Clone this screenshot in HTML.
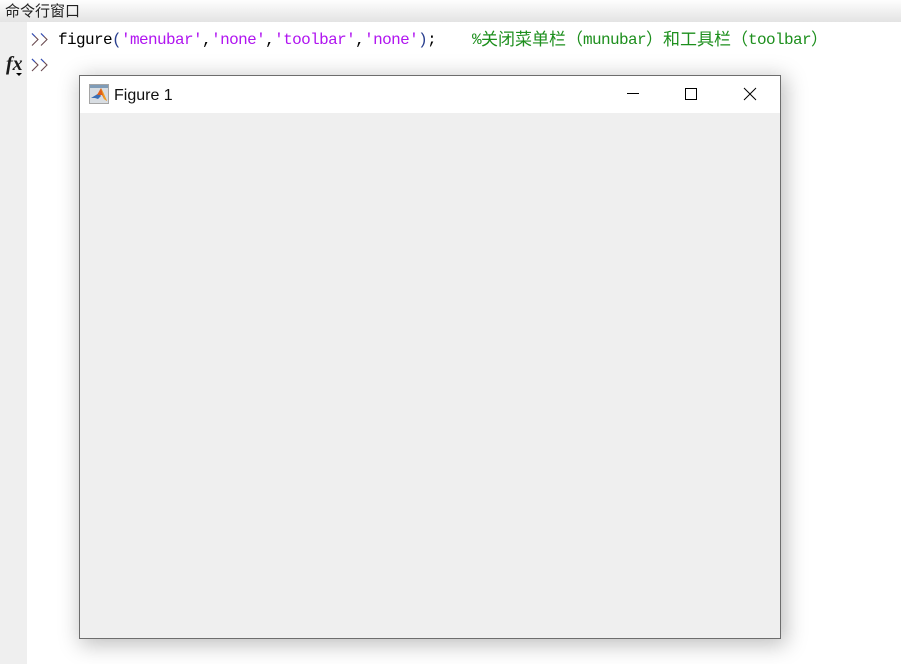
<!DOCTYPE html>
<html><head><meta charset="utf-8"><style>
html,body{margin:0;padding:0;background:#fff}
body{position:relative;width:901px;height:664px;overflow:hidden}
div,span.a{position:absolute}
#hd{left:0;top:0;width:901px;height:22px;background:linear-gradient(#fefefe,#e3e3e3)}
#hdt{left:5px;top:1px;font:15px/19px "Noto Sans CJK SC","WenQuanYi Zen Hei",sans-serif;color:#222;white-space:nowrap}
#gut{left:0;top:22px;width:27px;height:642px;background:#efefef}
.ln{font:16px/20px "Liberation Mono",monospace;letter-spacing:-.6px;white-space:pre;color:#000}
.p{color:#b014f0}.g{color:#1d8f1d}.b{color:#2a3f8f}
.c{position:absolute;top:-2px;font:17px/20px "WenQuanYi Zen Hei","Noto Sans CJK SC",sans-serif;color:#1d8f1d}
#win{left:79px;top:75px;width:700px;height:562px;border:1px solid #6d6d6d;background:#efefef;box-shadow:3px 4px 20px 2px rgba(0,0,0,.25)}
#tb{left:0;top:0;width:700px;height:37px;background:#fff}
#tt{left:34px;top:9px;font:16px/21px "Liberation Sans",sans-serif;color:#111;white-space:nowrap}
</style></head><body>
<div id="hd"></div>
<div id="hdt">命令行窗口</div>
<div id="gut"></div>
<svg style="position:absolute;left:30px;top:32px" width="20" height="42" fill="none" stroke-width="1.1"><path d="M2 1.5l6 6-6 6M11 1.5l6 6-6 6" stroke="#6a4a50"/><path d="M2 1.5l3 3M11 1.5l3 3" stroke="#3050c0"/><path d="M2 27l6 6-6 6M11 27l6 6-6 6" stroke="#6a4a50"/><path d="M2 27l3 3M11 27l3 3" stroke="#3050c0"/></svg>
<div class="ln" style="left:58px;top:30px">figure<span class="b">(</span><span class="p">'menubar'</span>,<span class="p">'none'</span>,<span class="p">'toolbar'</span>,<span class="p">'none'</span><span class="b">)</span>;</div>
<div class="ln g" style="left:472px;top:30px">%</div>
<div style="left:481px;top:30px;width:400px;height:20px">
<span class="c" style="left:0">关闭菜单栏</span><span class="c" style="left:85px">（</span><span class="ln g a" style="left:102px;top:0">munubar</span><span class="c" style="left:165px">）</span><span class="c" style="left:182px">和工具栏</span><span class="c" style="left:250px">（</span><span class="ln g a" style="left:267px;top:0">toolbar</span><span class="c" style="left:330px">）</span>
</div>
<div style="left:6px;top:52px;font:italic bold 20px/24px 'Liberation Serif',serif;color:#1a1a1a">fx</div>
<svg style="position:absolute;left:15px;top:72px" width="8" height="5"><path d="M1 1h6l-3 3z" fill="#000"/></svg>
<div id="win">
<div id="tb"></div>
<svg style="position:absolute;left:9px;top:8px" width="20" height="20"><rect x=".5" y=".5" width="19" height="19" fill="#d8dde2" stroke="#a5a5a5"/><rect x="1" y="1" width="18" height="3" fill="#7f9cb8"/><path d="M2 14l5-3 3-2 2 3-3 3-3-1z" fill="#3c6fb5"/><path d="M8 11l4-7 2 4 4 9-3-2-2-4z" fill="#e0601a"/><path d="M12 4l2 4 4 9-3-2z" fill="#f0a020"/></svg>
<div id="tt">Figure 1</div>
<svg style="position:absolute;left:540px;top:8px" width="140" height="20" fill="none" stroke="#000" stroke-width="1" shape-rendering="crispEdges"><path d="M7 9.5h12"/><rect x="65.5" y="4.5" width="11" height="11"/><path d="M124 4l12 12M136 4l-12 12" shape-rendering="auto"/></svg>
</div>
</body></html>
